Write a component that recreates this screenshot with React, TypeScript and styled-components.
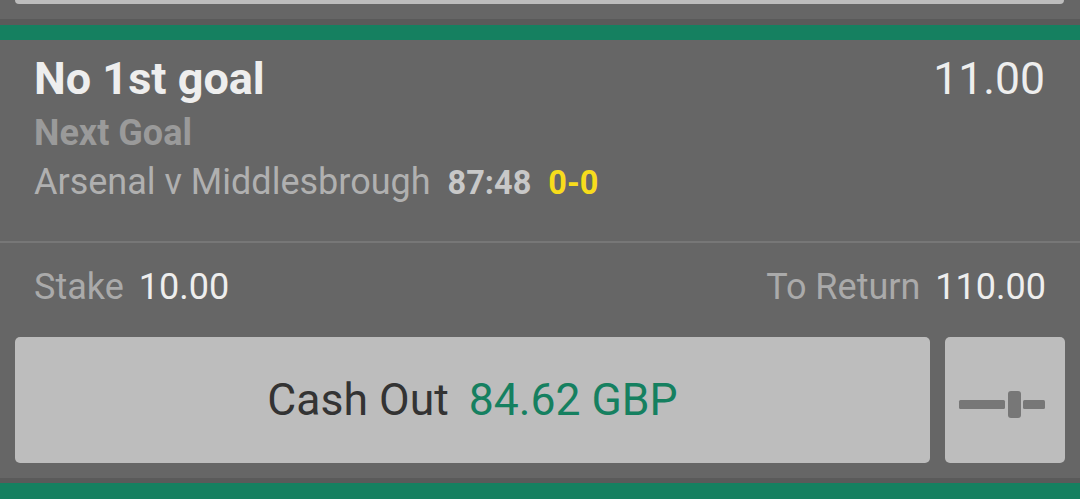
import React from "react";
import styled, { createGlobalStyle } from "styled-components";

const Global = createGlobalStyle`
  html, body { margin: 0; padding: 0; background: #666666; }
  body { font-family: Roboto, "Noto Sans", sans-serif; width: 1080px; height: 499px; overflow: hidden; }
`;

const Page = styled.div`
  width: 1080px;
  height: 499px;
  display: flex;
  flex-direction: column;
  background: #666666;
`;

const PrevButtonEdge = styled.div`
  height: 4px;
  margin: 0 16px 0 15px;
  background: #bdbdbd;
  border-radius: 0 0 6px 6px;
  flex: none;
`;

const Separator = styled.div<{ $top: number }>`
  flex: none;
  margin-top: ${(p) => p.$top}px;
  border-top: 6px solid #5a5a5a;
  height: 15px;
  background: #158060;
`;

const Card = styled.div`
  flex: 1;
  display: flex;
  flex-direction: column;
`;

const Selection = styled.div`
  padding: 16px 35px 0 34px;
  height: 201px;
  box-sizing: border-box;
`;

const HeaderRow = styled.div`
  display: flex;
  justify-content: space-between;
  align-items: baseline;
`;

const Title = styled.div`
  font-size: 45px;
  line-height: 45px;
  font-weight: 700;
  color: #eeeeee;
`;

const Odds = styled.div`
  font-size: 44.5px;
  line-height: 45px;
  font-weight: 400;
  color: #eeeeee;
`;

const Market = styled.div`
  margin-top: 13px;
  font-size: 36px;
  line-height: 36px;
  font-weight: 700;
  color: #9a9a9a;
`;

const EventRow = styled.div`
  margin-top: 13px;
  display: flex;
  align-items: baseline;
  gap: 17px;
`;

const EventName = styled.span`
  font-size: 36px;
  line-height: 36px;
  color: #b0b0b0;
`;

const Clock = styled.span`
  font-size: 32.5px;
  line-height: 36px;
  font-weight: 700;
  color: #c8c8c8;
`;

const Score = styled.span`
  font-size: 32.5px;
  line-height: 36px;
  font-weight: 700;
  color: #f7dc1c;
`;

const Divider = styled.div`
  height: 2px;
  background: #777777;
  flex: none;
`;

const StakeRow = styled.div`
  display: flex;
  justify-content: space-between;
  padding: 26px 34px 0 34px;
  height: 94px;
  box-sizing: border-box;
`;

const Pair = styled.div`
  display: flex;
  align-items: baseline;
  gap: 15px;
  font-size: 36px;
  line-height: 36px;
`;

const Label = styled.span`
  color: #aaaaaa;
`;

const Value = styled.span`
  color: #eeeeee;
`;

const ButtonRow = styled.div`
  display: flex;
  gap: 15px;
  padding: 0 15px;
  height: 126px;
  flex: none;
`;

const CashOutButton = styled.button`
  flex: 1;
  border: none;
  border-radius: 5px;
  background: #bdbdbd;
  display: flex;
  align-items: center;
  justify-content: center;
  gap: 20px;
  font-family: Roboto, sans-serif;
  font-size: 44.5px;
  padding: 0;
`;

const CashLabel = styled.span`
  color: #333333;
`;

const CashAmount = styled.span`
  color: #158060;
`;

const SliderButton = styled.button`
  width: 120px;
  flex: none;
  border: none;
  border-radius: 5px;
  background: #bdbdbd;
  display: flex;
  align-items: center;
  justify-content: center;
  padding: 0;
`;

const Footer = styled.div`
  flex: none;
  margin-top: 15px;
  border-top: 5px solid #5a5a5a;
  height: 16px;
  background: #158060;
`;

const SliderIcon = () => (
  <svg width="120" height="126" viewBox="0 0 120 126">
    <rect x="14" y="63" width="46" height="9" rx="1.5" fill="#777777" />
    <rect x="63" y="54" width="13" height="27" rx="3" fill="#777777" />
    <rect x="78" y="63" width="22" height="9" rx="1.5" fill="#777777" />
  </svg>
);

export default function App() {
  return (
    <>
      <Global />
      <Page>
        <PrevButtonEdge />
        <Separator $top={15} />
        <Card>
          <Selection>
            <HeaderRow>
              <Title>No 1st goal</Title>
              <Odds>11.00</Odds>
            </HeaderRow>
            <Market>Next Goal</Market>
            <EventRow>
              <EventName>Arsenal v Middlesbrough</EventName>
              <Clock>87:48</Clock>
              <Score>0-0</Score>
            </EventRow>
          </Selection>
          <Divider />
          <StakeRow>
            <Pair>
              <Label>Stake</Label>
              <Value>10.00</Value>
            </Pair>
            <Pair>
              <Label>To Return</Label>
              <Value>110.00</Value>
            </Pair>
          </StakeRow>
          <ButtonRow>
            <CashOutButton>
              <CashLabel>Cash Out</CashLabel>
              <CashAmount>84.62 GBP</CashAmount>
            </CashOutButton>
            <SliderButton>
              <SliderIcon />
            </SliderButton>
          </ButtonRow>
        </Card>
        <Footer />
      </Page>
    </>
  );
}
